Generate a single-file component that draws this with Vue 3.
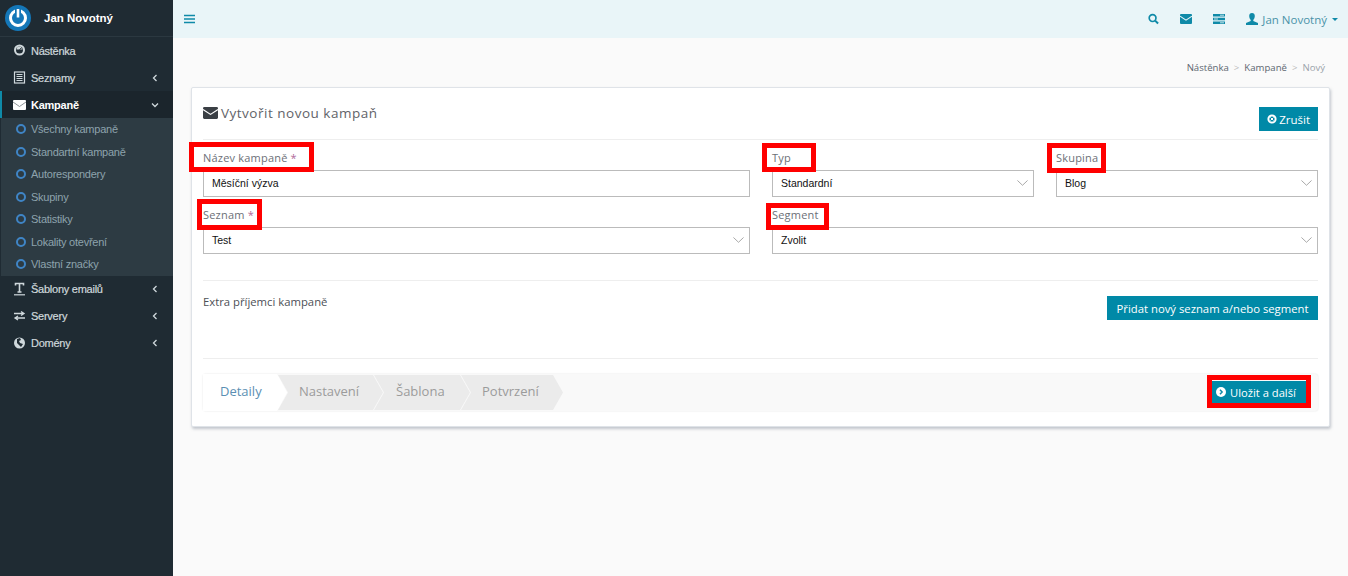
<template>
  <div class="app">
    <aside class="sidebar">
      <div class="brand">
        <span class="logo">
          <svg width="26" height="26" viewBox="0 0 26 26"><circle cx="13" cy="13" r="13" fill="#1477b8"/><circle cx="13" cy="13" r="7.500" fill="none" stroke="#fff" stroke-width="3"/><path d="M13 3.500v9" stroke="#1477b8" stroke-width="6"/><path d="M13 4v8.500" stroke="#fff" stroke-width="2.600"/></svg>
        </span>
        <span class="brand-name">Jan Novotný</span>
      </div>
      <nav>
        <template v-for="item in menu" :key="item.label">
          <div class="nav-item" :class="{ active: item.open }">
            <span class="nav-icon">
              <svg width="14" height="14" viewBox="0 0 14 14" v-html="item.icon"></svg>
            </span>
            <span class="nav-label">{{ item.label }}</span>
            <svg v-if="item.arrow" class="nav-arrow" width="8" height="8" viewBox="0 0 8 8">
              <path :d="item.open ? 'M1 2.500L4 5.500L7 2.500' : 'M5.500 1L2.500 4L5.500 7'" fill="none" stroke="currentColor" stroke-width="1.300"/>
            </svg>
          </div>
          <div v-if="item.open" class="submenu">
            <div v-for="sub in submenu" :key="sub" class="sub-item">
              <span class="ring"></span>{{ sub }}
            </div>
          </div>
        </template>
      </nav>
    </aside>

    <div class="main">
      <header class="topbar">
        <svg class="burger" width="11" height="10" viewBox="0 0 11 10"><path d="M0 1.500h11M0 5h11M0 8.500h11" stroke="#0f8aa8" stroke-width="1.600"/></svg>
        <div class="top-right">
          <svg width="11" height="12" viewBox="0 0 12 12"><circle cx="5" cy="5" r="3.700" fill="none" stroke="#0f8aa8" stroke-width="1.800"/><path d="M7.800 7.800L11 11" stroke="#0f8aa8" stroke-width="2.200"/></svg>
          <svg width="12" height="10" viewBox="0 0 12 10"><rect width="12" height="10" rx="1" fill="#0f8aa8"/><path d="M0 2.200L6 6.200L12 2.200" fill="none" stroke="#e9f5f8" stroke-width="1.100"/></svg>
          <svg width="12" height="10" viewBox="0 0 12 10"><path d="M0 0h12v2.400H0zM0 3.700h12v2.600H0zM0 7.600h12V10H0z" fill="#0f8aa8"/><path d="M7 1.200h4M1 5h4M7 8.800h4" stroke="#e9f5f8" stroke-width="0.800"/></svg>
          <span class="user">
            <svg width="12" height="12" viewBox="0 0 12 12"><path d="M6 0c1.800 0 2.800 1.300 2.800 3.100S7.900 6.400 7.300 7v1.100L12 10v2H0v-2l4.700-1.900V7C4.100 6.400 3.200 4.900 3.200 3.100S4.200 0 6 0z" fill="#0f8aa8"/></svg>
            <span>Jan Novotný</span>
            <i class="caret"></i>
          </span>
        </div>
      </header>

      <main class="content">
        <div class="breadcrumb">
          <span>Nástěnka</span><em>&gt;</em><span>Kampaně</span><em>&gt;</em><span class="last">Nový</span>
        </div>

        <section class="card">
          <div class="card-head">
            <h1>
              <svg width="15" height="12" viewBox="0 0 14 11"><rect width="14" height="11" rx="1.200" fill="#3a3f44"/><path d="M0 2.300L7 6.800L14 2.300" fill="none" stroke="#fff" stroke-width="1.100"/></svg>
              Vytvořit novou kampaň
            </h1>
            <button class="btn cancel">
              <svg width="10" height="10" viewBox="0 0 10 10"><circle cx="5" cy="5" r="3.600" fill="none" stroke="#fff" stroke-width="2"/><path d="M3.500 3.500L6.500 6.500M6.500 3.500L3.500 6.500" stroke="#fff" stroke-width="1"/></svg>
              Zrušit
            </button>
          </div>

          <div class="form-grid">
            <div v-for="f in fields" :key="f.label" class="field" :style="{ gridColumn: f.col }">
              <label>
                {{ f.label }}<b v-if="f.req"> *</b>
                <span class="mark" :class="f.mark"></span>
              </label>
              <div class="control">
                <span>{{ f.value }}</span>
                <svg v-if="f.select" width="11" height="6" viewBox="0 0 13 7"><path d="M.5.500L6.500 6.200L12.500.500" fill="none" stroke="#999" stroke-width="1"/></svg>
              </div>
            </div>
          </div>

          <div class="extra">
            <span>Extra příjemci kampaně</span>
            <button class="btn add">Přidat nový seznam a/nebo segment</button>
          </div>

          <div class="wizard">
            <div class="steps">
              <div class="step current">Detaily</div>
              <div class="step s1">Nastavení</div>
              <div class="step s2">Šablona</div>
              <div class="step s3">Potvrzení</div>
            </div>
            <button class="btn save">
              <svg width="10" height="10" viewBox="0 0 10 10"><circle cx="5" cy="5" r="5" fill="#fff"/><path d="M4 2.800L6.100 5L4 7.200" fill="none" stroke="#0f8aa8" stroke-width="1.500"/></svg>
              Uložit a další
              <span class="mark mark-save"></span>
            </button>
          </div>
        </section>
      </main>
    </div>
  </div>
</template>

<script setup>
const menu = [
  { label: 'Nástěnka', icon: '<circle cx="6.500" cy="6" r="4.500" fill="none" stroke="#cfd8dc" stroke-width="2"/><path d="M3.500 5.500a3 3 0 0 1 6 0z" fill="#cfd8dc"/><path d="M6.500 5.500L9 3.500" stroke="#1f2b33" stroke-width="1"/>' },
  { label: 'Seznamy', arrow: true, icon: '<rect x="1.500" y="1" width="10" height="11" fill="none" stroke="#cfd8dc" stroke-width="1.200"/><path d="M3.500 3.500h6M3.500 5.500h6M3.500 7.500h6M3.500 9.500h6" stroke="#cfd8dc" stroke-width="1"/>' },
  { label: 'Kampaně', arrow: true, open: true, icon: '<rect y="2" width="13" height="10" rx="1" fill="#fff"/><path d="M0 4L6.500 8.500L13 4" fill="none" stroke="#8d9498" stroke-width="1"/>' },
  { label: 'Šablony emailů', arrow: true, icon: '<path d="M2.500 3.500V1.500h8v2M6.500 1.500v8.500M4.500 10h4" fill="none" stroke="#cfd8dc" stroke-width="1.600"/><path d="M1 12.800h11" stroke="#cfd8dc" stroke-width="1.200"/>' },
  { label: 'Servery', arrow: true, icon: '<path d="M1 4.500h9M8 2.500L11 4.500L8 6.500M12 9H3M5 7L2 9L5 11" fill="none" stroke="#cfd8dc" stroke-width="1.300"/>' },
  { label: 'Domény', arrow: true, icon: '<circle cx="6.500" cy="7" r="5.500" fill="#cfd8dc"/><path d="M4 3l3-1 1 2-2 1 1 2 3 1-2 3-2-2-2-2z" fill="#1f2b33"/>' },
]

const submenu = ['Všechny kampaně', 'Standartní kampaně', 'Autorespondery', 'Skupiny', 'Statistiky', 'Lokality otevření', 'Vlastní značky']

const fields = [
  { label: 'Název kampaně', req: true, value: 'Měsíční výzva', col: '1', mark: 'm-name' },
  { label: 'Typ', value: 'Standardní', select: true, col: '2', mark: 'm-typ' },
  { label: 'Skupina', value: 'Blog', select: true, col: '3', mark: 'm-group' },
  { label: 'Seznam', req: true, value: 'Test', select: true, col: '1', mark: 'm-list' },
  { label: 'Segment', value: 'Zvolit', select: true, col: '2 / 4', mark: 'm-seg' },
]
</script>

<style>
html, body { margin: 0; background: #fafafa; }
</style>

<style scoped>
.app {
  display: flex;
  width: 1348px;
  height: 576px;
  overflow: hidden;
  font-family: "Liberation Sans", Arial, sans-serif;
}

/* sidebar */
.sidebar {
  width: 173px;
  flex-shrink: 0;
  background: #1f2b33;
  color: #cfd8dc;
  font-size: 11px;
  letter-spacing: -.25px;
}
.brand {
  display: flex;
  align-items: center;
  height: 36px;
  padding-left: 5px;
  border-bottom: 1px solid #2b3840;
  letter-spacing: 0;
}
.logo { display: flex; width: 39px; }
.brand-name { color: #fff; font-weight: 700; font-size: 11.500px; }
.nav-item {
  display: flex;
  align-items: center;
  height: 27px;
  padding: 0 14px 0 13px;
  -webkit-text-stroke: 0.2px currentColor;
}
.nav-item.active {
  background: #1b252c;
  color: #fff;
  border-left: 2px solid #0f8aa8;
  padding-left: 11px;
  font-weight: 700;
  -webkit-text-stroke: 0;
}
.nav-icon { display: flex; width: 18px; }
.nav-label { flex: 1; }
.nav-arrow { color: #cfd8dc; }
.submenu { background: #2d3b43; margin-left: 1px; }
.sub-item {
  display: flex;
  align-items: center;
  height: 22.500px;
  padding-left: 15px;
  color: #8ea3ad;
}
.ring {
  width: 6px;
  height: 6px;
  border: 2px solid #3f85c6;
  border-radius: 50%;
  margin-right: 5px;
}

/* top */
.main { flex: 1; display: flex; flex-direction: column; min-width: 0; }
.topbar {
  display: flex;
  align-items: center;
  justify-content: space-between;
  height: 38px;
  padding: 0 10px 0 11px;
  background: #e9f5f8;
  flex-shrink: 0;
}
.top-right { display: flex; align-items: center; gap: 21px; }
.user {
  display: flex;
  align-items: center;
  gap: 4px;
  color: #4a93a8;
  font-family: "Open Sans", sans-serif;
  font-size: 11.500px;
}
.caret {
  margin-left: 1px;
  border: 3px solid transparent;
  border-top: 3px solid #0f8aa8;
  border-bottom: 0;
}

.content { flex: 1; padding: 0 18px; background: #fafafa; }
.breadcrumb {
  display: flex;
  justify-content: flex-end;
  gap: 5px;
  height: 49px;
  padding: 23px 5px 0 0;
  box-sizing: border-box;
  font-family: "Open Sans", sans-serif;
  font-size: 9.600px;
  color: #5c6670;
}
.breadcrumb em { font-style: normal; color: #bbb; }
.breadcrumb .last { color: #9aa3aa; }

/* card */
.card {
  width: 1139px;
  height: 340px;
  box-sizing: border-box;
  padding: 0 11px;
  background: #fff;
  border: 1px solid #dfe3e8;
  border-radius: 2px;
  box-shadow: 1px 2px 3px rgba(90, 100, 120, .35);
}
.card-head {
  display: flex;
  justify-content: space-between;
  height: 52px;
  padding-top: 19px;
  box-sizing: border-box;
  border-bottom: 1px solid #eee;
}
.card-head h1 {
  display: flex;
  align-items: center;
  gap: 3px;
  height: 15px;
  margin: -2px 0 0;
  font-family: "Open Sans", sans-serif;
  font-weight: 400;
  font-size: 13.500px;
  letter-spacing: .5px;
  color: #5f6369;
}
.btn {
  display: inline-flex;
  align-items: center;
  border: 0;
  border-radius: 0;
  background: #0089a7;
  color: #fff;
  font-family: "Open Sans", sans-serif;
  font-size: 11.500px;
  cursor: pointer;
}
.btn.cancel {
  gap: 2px;
  height: 24px;
  margin: 0;
  padding: 0 8px;
}

.form-grid {
  display: grid;
  grid-template-columns: 547px 262px 262px;
  column-gap: 22px;
  row-gap: 11px;
  padding-top: 11px;
}
.field label {
  position: relative;
  display: block;
  height: 19px;
  line-height: 13px;
  font-family: "Open Sans", sans-serif;
  font-size: 11px;
  letter-spacing: .2px;
  color: #6c7077;
}
.field label b { font-weight: 400; color: #b06a9a; }
.control {
  display: flex;
  align-items: center;
  justify-content: space-between;
  height: 27px;
  box-sizing: border-box;
  padding: 0 5px 2px 8px;
  border: 1px solid #bbb;
  font-size: 10.500px;
  color: #111;
}

/* red annotation boxes */
.mark {
  position: absolute;
  border: 5px solid #f00;
  box-sizing: border-box;
  pointer-events: none;
}
.m-name { left: -14px; top: -9px; width: 125px; height: 30px; }
.m-typ { left: -10px; top: -8px; width: 54px; height: 29px; }
.m-group { left: -9px; top: -8px; width: 59px; height: 30px; }
.m-list { left: -6px; top: -9px; width: 65px; height: 31px; }
.m-seg { left: -6px; top: -5px; width: 63px; height: 27px; }
.mark-save { left: -5px; top: -6px; width: 104px; height: 33px; }

.extra {
  display: flex;
  justify-content: space-between;
  align-items: flex-start;
  height: 79px;
  margin-top: 26px;
  padding-top: 15px;
  box-sizing: border-box;
  border-top: 1px solid #eee;
  border-bottom: 1px solid #eee;
  font-family: "Open Sans", sans-serif;
  font-size: 11.300px;
  color: #4c5056;
}
.extra > span { margin-top: -2px; }
.btn.add { height: 24px; padding: 0 9.500px; font-size: 11.300px; }

.wizard {
  display: flex;
  align-items: center;
  justify-content: space-between;
  height: 37px;
  margin-top: 15px;
  padding-right: 12px;
  background: #f9f9f9;
  border-radius: 3px;
  box-shadow: 0 0 2px rgba(0, 0, 0, .12);
}
.steps { display: flex; align-items: center; height: 37px; font-family: "Open Sans", sans-serif; font-size: 13px; }
.step {
  display: flex;
  align-items: center;
  height: 35px;
  padding-bottom: 3px;
  color: #9b9b9b;
  background: #ebebeb;
  clip-path: polygon(0 0, calc(100% - 10px) 0, 100% 50%, calc(100% - 10px) 100%, 0 100%, 10px 50%);
  box-sizing: border-box;
}
.step.current {
  width: 84px;
  height: 37px;
  padding-left: 17px;
  background: #fff;
  color: #5b8fb3;
  clip-path: polygon(0 0, calc(100% - 10px) 0, 100% 50%, calc(100% - 10px) 100%, 0 100%);
}
.step.s1 { width: 105px; padding-left: 21px; margin-left: -9px; }
.step.s2 { width: 96px; padding-left: 22px; margin-left: -9px; }
.step.s3 { width: 102px; padding-left: 21px; margin-left: -9px; }
.btn.save {
  position: relative;
  gap: 4px;
  width: 94px;
  height: 22px;
  margin-top: -1px;
  padding: 0 0 0 4px;
  font-size: 11.200px;
}
</style>
